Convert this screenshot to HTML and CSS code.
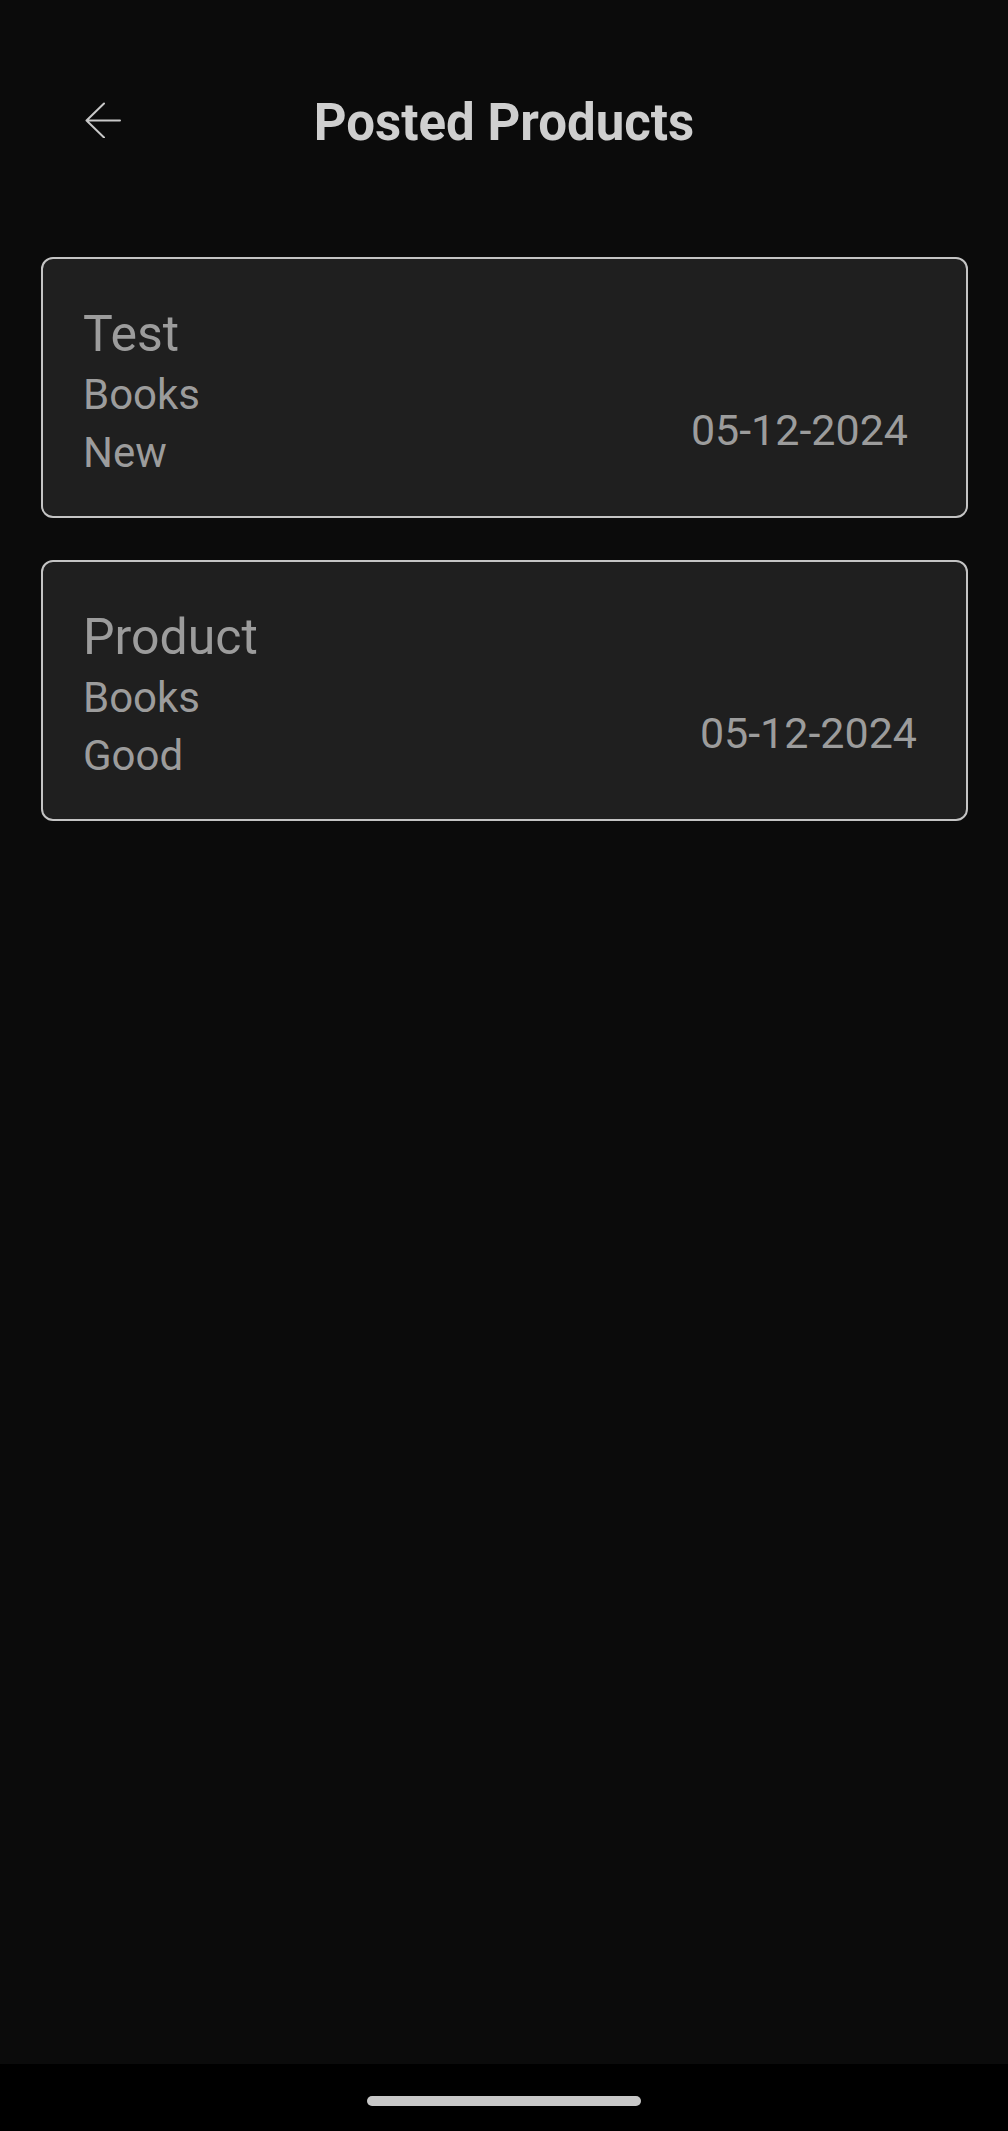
FILE: index.html
```html
<!DOCTYPE html>
<html lang="en">
<head>
<meta charset="utf-8">
<title>Posted Products</title>
<link rel="stylesheet" href="styles.css">
</head>
<body>
<div class="screen">
  <main class="main">
    <header class="topbar">
      <button class="back" aria-label="Back">
        <svg class="back-icon" viewBox="0 0 36 36" width="36" height="36">
          <path d="M35 18.5H1.5M19 1.5L1.5 18.5L19 35.5" fill="none" stroke="#c8c8c8" stroke-width="2" stroke-linecap="round" stroke-linejoin="round"/>
        </svg>
      </button>
      <h1 class="title">Posted Products</h1>
      <span class="spacer"></span>
    </header>

    <section class="list">
      <article class="card card--first">
        <div class="info">
          <div class="name">Test</div>
          <div class="meta">Books</div>
          <div class="meta">New</div>
        </div>
        <div class="date">05-12-2024</div>
      </article>
      <article class="card card--second">
        <div class="info">
          <div class="name">Product</div>
          <div class="meta">Books</div>
          <div class="meta">Good</div>
        </div>
        <div class="date">05-12-2024</div>
      </article>
    </section>
  </main>
  <footer class="navbar">
    <span class="pill"></span>
  </footer>
</div>
</body>
</html>
```
FILE: styles.css
```css
* { box-sizing: border-box; }

html, body {
  margin: 0;
  padding: 0;
  background: #0b0b0b;
}

body {
  font-family: Roboto, "Noto Sans", "Liberation Sans", sans-serif;
  color: #9c9c9c;
}

.screen {
  min-height: 100vh;
  display: flex;
  flex-direction: column;
}

.main {
  flex: 1;
}

.topbar {
  display: grid;
  grid-template-columns: 1fr auto 1fr;
  height: 80px;
  margin-top: 83px;
}

.back {
  justify-self: start;
  align-self: start;
  margin: 19px 0 0 85px;
  padding: 0;
  border: 0;
  background: transparent;
  width: 36px;
  height: 36px;
  display: block;
}

.back-icon { display: block; }

.title {
  margin: 0;
  font-size: 51px;
  line-height: 80px;
  font-weight: 700;
  color: #cfcfcf;
}

.list {
  margin: 94px 40px 0 41px;
  display: flex;
  flex-direction: column;
  gap: 42px;
}

.card {
  display: flex;
  justify-content: space-between;
  align-items: flex-start;
  background: #1f1f1f;
  border: 2px solid #c4c4c4;
  border-radius: 12px;
  padding: 43px 58px 34px 40px;
}

.card--second {
  padding-right: 49px;
}

.info {
  display: flex;
  flex-direction: column;
}

.name {
  font-size: 50px;
  line-height: 64px;
}

.meta {
  font-size: 42px;
  line-height: 58px;
}

.date {
  font-size: 43px;
  line-height: 58px;
  margin-top: 99px;
}

.navbar {
  height: 67px;
  background: #000;
  display: flex;
  justify-content: center;
  align-items: flex-start;
  padding-top: 32px;
}

.pill {
  width: 274px;
  height: 10px;
  border-radius: 5px;
  background: #c8c8c8;
}
```
